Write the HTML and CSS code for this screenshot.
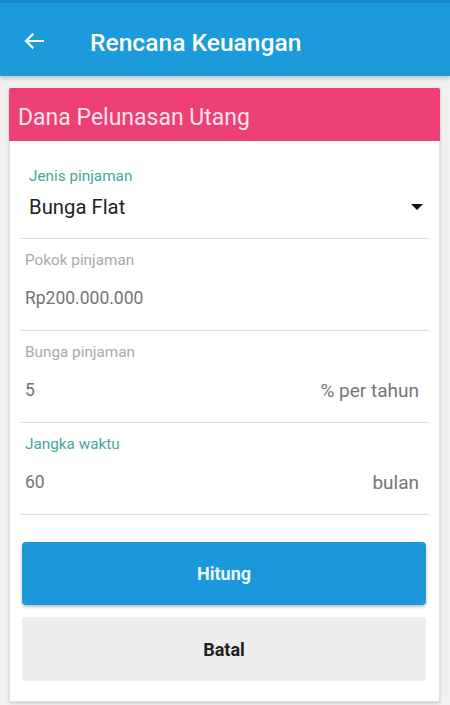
FILE: index.html
```html
<!DOCTYPE html>
<html lang="id">
<head>
<meta charset="utf-8">
<title>Rencana Keuangan</title>
<link rel="stylesheet" href="styles.css">
</head>
<body>
<header class="appbar">
  <svg class="back" viewBox="0 0 20 16" width="20" height="16" aria-hidden="true">
    <path d="M19 8H2M8.5 1.5L2 8l6.5 6.5" fill="none" stroke="#ffffff" stroke-width="2.2" stroke-linecap="square"/>
  </svg>
  <h1 class="title">Rencana Keuangan</h1>
</header>
<main class="card">
  <div class="card-head">Dana Pelunasan Utang</div>
  <div class="card-body">
    <div class="spinner">
      <div class="label label-active">Jenis pinjaman</div>
      <div class="spinner-row">
        <span class="spinner-value">Bunga Flat</span>
        <svg class="caret" viewBox="0 0 12 6" width="12" height="6" aria-hidden="true"><path d="M0 0h12L6 6z" fill="#111"/></svg>
      </div>
    </div>
    <div class="field">
      <div class="label">Pokok pinjaman</div>
      <div class="row"><span class="value">Rp200.000.000</span></div>
    </div>
    <div class="field">
      <div class="label">Bunga pinjaman</div>
      <div class="row"><span class="value">5</span><span class="suffix">% per tahun</span></div>
    </div>
    <div class="field">
      <div class="label label-active">Jangka waktu</div>
      <div class="row"><span class="value">60</span><span class="suffix">bulan</span></div>
    </div>
    <div class="actions">
      <button class="btn btn-primary">Hitung</button>
      <button class="btn btn-secondary">Batal</button>
    </div>
  </div>
</main>
</body>
</html>
```
FILE: styles.css
```css
* { box-sizing: border-box; }
html, body { margin: 0; padding: 0; }
body {
  background: #f1f1f1;
  font-family: Roboto, "Noto Sans", "Liberation Sans", sans-serif;
  width: 450px;
  height: 705px;
  overflow: hidden;
}
.appbar {
  height: 76px;
  background: #1b9bdb;
  border-top: 3px solid #1788c4;
  display: flex;
  align-items: center;
  padding-left: 24px;
  box-shadow: 0 2px 4px rgba(0,0,0,0.22);
  position: relative;
  z-index: 1;
}
.back { display: block; flex: none; margin-top: 2px; }
.title {
  margin: 0 0 0 46px;
  font-size: 24.6px;
  font-weight: 500;
  color: #ffffff;
  line-height: 28px;
  padding-top: 6px;
}
.card {
  display: block;
  margin: 12px 10px 0 9px;
  background: #ffffff;
  border: 1px solid #e2e2e2;
  border-radius: 2px;
  box-shadow: 0 1px 3px rgba(0,0,0,0.18);
}
.card-head {
  height: 53px;
  background: #ec3f74;
  color: #fde3ec;
  font-size: 23px;
  line-height: 53px;
  padding: 3px 0 0 9px;
  margin: -1px -1px 0 -1px;
  border-radius: 2px 2px 0 0;
}
.card-body {
  padding: 0 10px 20px 10px;
}
.spinner {
  padding: 27px 0 17px 9px;
  border-bottom: 1px solid #dedede;
}
.spinner-row {
  display: flex;
  align-items: center;
  justify-content: space-between;
  margin-top: 9px;
  height: 28px;
  padding-right: 6px;
}
.spinner-value {
  font-size: 20.3px;
  color: #222222;
}
.caret { display: block; }
.label {
  font-size: 15.3px;
  line-height: 16px;
  color: #a9a9a9;
}
.label-active { color: #42a99a; }
.field {
  padding: 13px 10px 20px 5px;
  border-bottom: 1px solid #dedede;
}
.row {
  display: flex;
  align-items: center;
  justify-content: space-between;
  height: 24px;
  margin-top: 18px;
}
.value {
  font-size: 17.5px;
  color: #747474;
}
.suffix {
  font-size: 19px;
  color: #757575;
}
.actions {
  display: flex;
  flex-direction: column;
  gap: 12px;
  padding: 27px 3px 0 2px;
}
.btn {
  display: block;
  width: 100%;
  border: none;
  border-radius: 4px;
  font-family: Roboto, "Noto Sans", "Liberation Sans", sans-serif;
  font-size: 18px;
  font-weight: 700;
  cursor: pointer;
}
.btn-primary {
  height: 63px;
  background: #1b98dc;
  color: #eaf6fd;
  box-shadow: 0 2px 3px rgba(0,0,0,0.25);
}
.btn-secondary {
  height: 64px;
  background: #eeeeee;
  color: #222222;
  border-radius: 3px;
}
```
